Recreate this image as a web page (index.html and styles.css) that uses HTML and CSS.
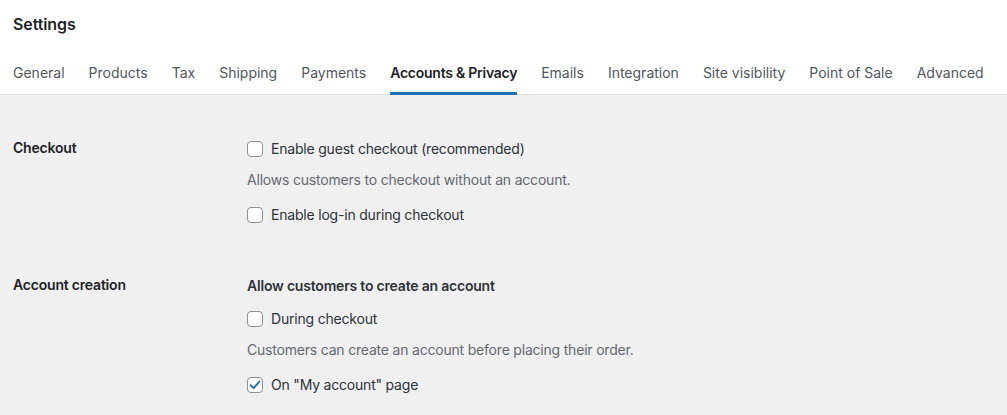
FILE: index.html
```html
<!DOCTYPE html>
<html lang="en">
<head>
<meta charset="utf-8">
<title>Settings</title>
<link rel="stylesheet" href="styles.css">
</head>
<body>
<header class="page-header">
  <h1 class="title">Settings</h1>
  <nav class="tabs">
    <a class="tab">General</a>
    <a class="tab">Products</a>
    <a class="tab">Tax</a>
    <a class="tab">Shipping</a>
    <a class="tab">Payments</a>
    <a class="tab active">Accounts &amp; Privacy</a>
    <a class="tab">Emails</a>
    <a class="tab">Integration</a>
    <a class="tab">Site visibility</a>
    <a class="tab">Point of Sale</a>
    <a class="tab">Advanced</a>
  </nav>
</header>
<main class="content">
  <section class="row">
    <div class="label">Checkout</div>
    <div class="field">
      <label class="check"><span class="box"></span>Enable guest checkout (recommended)</label>
      <p class="desc">Allows customers to checkout without an account.</p>
      <label class="check gap-l"><span class="box"></span>Enable log-in during checkout</label>
    </div>
  </section>
  <section class="row second">
    <div class="label">Account creation</div>
    <div class="field">
      <div class="subhead">Allow customers to create an account</div>
      <label class="check gap-m"><span class="box"></span>During checkout</label>
      <p class="desc">Customers can create an account before placing their order.</p>
      <label class="check gap-l"><span class="box checked"><svg viewBox="0 0 16 16" width="16" height="16"><path d="M3.6 8.2 L6.6 11.1 L12.4 4.6" fill="none" stroke="#2271b1" stroke-width="1.9" stroke-linecap="round" stroke-linejoin="round"/></svg></span>On "My account" page</label>
    </div>
  </section>
</main>
</body>
</html>
```

FILE: styles.css
```css
* { box-sizing: border-box; }
html, body {
  margin: 0;
  padding: 0;
  height: 100%;
}
body {
  font-family: Inter, "Liberation Sans", Arial, sans-serif;
  font-size: 14px;
  line-height: 20px;
  color: #1d2327;
  background: #f0f0f1;
  letter-spacing: -0.2px;
}
.page-header {
  background: #fff;
  border-bottom: 1px solid #e2e2e4;
  padding: 14px 13px 0;
}
.title {
  margin: 0;
  font-size: 16px;
  line-height: 20px;
  font-weight: 600;
  color: #1d2327;
  letter-spacing: -0.1px;
}
.tabs {
  display: flex;
  gap: 24px;
  margin-top: 29px;
  margin-bottom: -1px;
}
.tab {
  display: block;
  color: #50575e;
  font-size: 14px;
  line-height: 20px;
  padding-bottom: 9px;
  border-bottom: 3px solid transparent;
  white-space: nowrap;
  letter-spacing: 0;
}
.tab.active {
  color: #1d2327;
  font-weight: 600;
  border-bottom-color: #2271b1;
  letter-spacing: -0.25px;
}
.content {
  padding: 44px 13px 0;
}
.row {
  display: grid;
  grid-template-columns: 234px 1fr;
}
.row.second {
  margin-top: 51px;
}
.label {
  font-weight: 600;
  font-size: 14px;
  line-height: 18px;
}
.field {
  display: flex;
  flex-direction: column;
  align-items: flex-start;
}
.check {
  display: flex;
  align-items: center;
  gap: 8px;
  color: #2c3338;
}
.box {
  width: 16px;
  height: 16px;
  border: 1px solid #8c8f94;
  border-radius: 4px;
  background: #fff;
  display: flex;
  align-items: center;
  justify-content: center;
  flex: none;
}
.box svg {
  display: block;
  margin: -1px;
}
.desc {
  margin: 11px 0 0;
  color: #646970;
}
.gap-l { margin-top: 15px; }
.gap-m { margin-top: 13px; }
.subhead {
  font-weight: 600;
  color: #2c3338;
}
```
